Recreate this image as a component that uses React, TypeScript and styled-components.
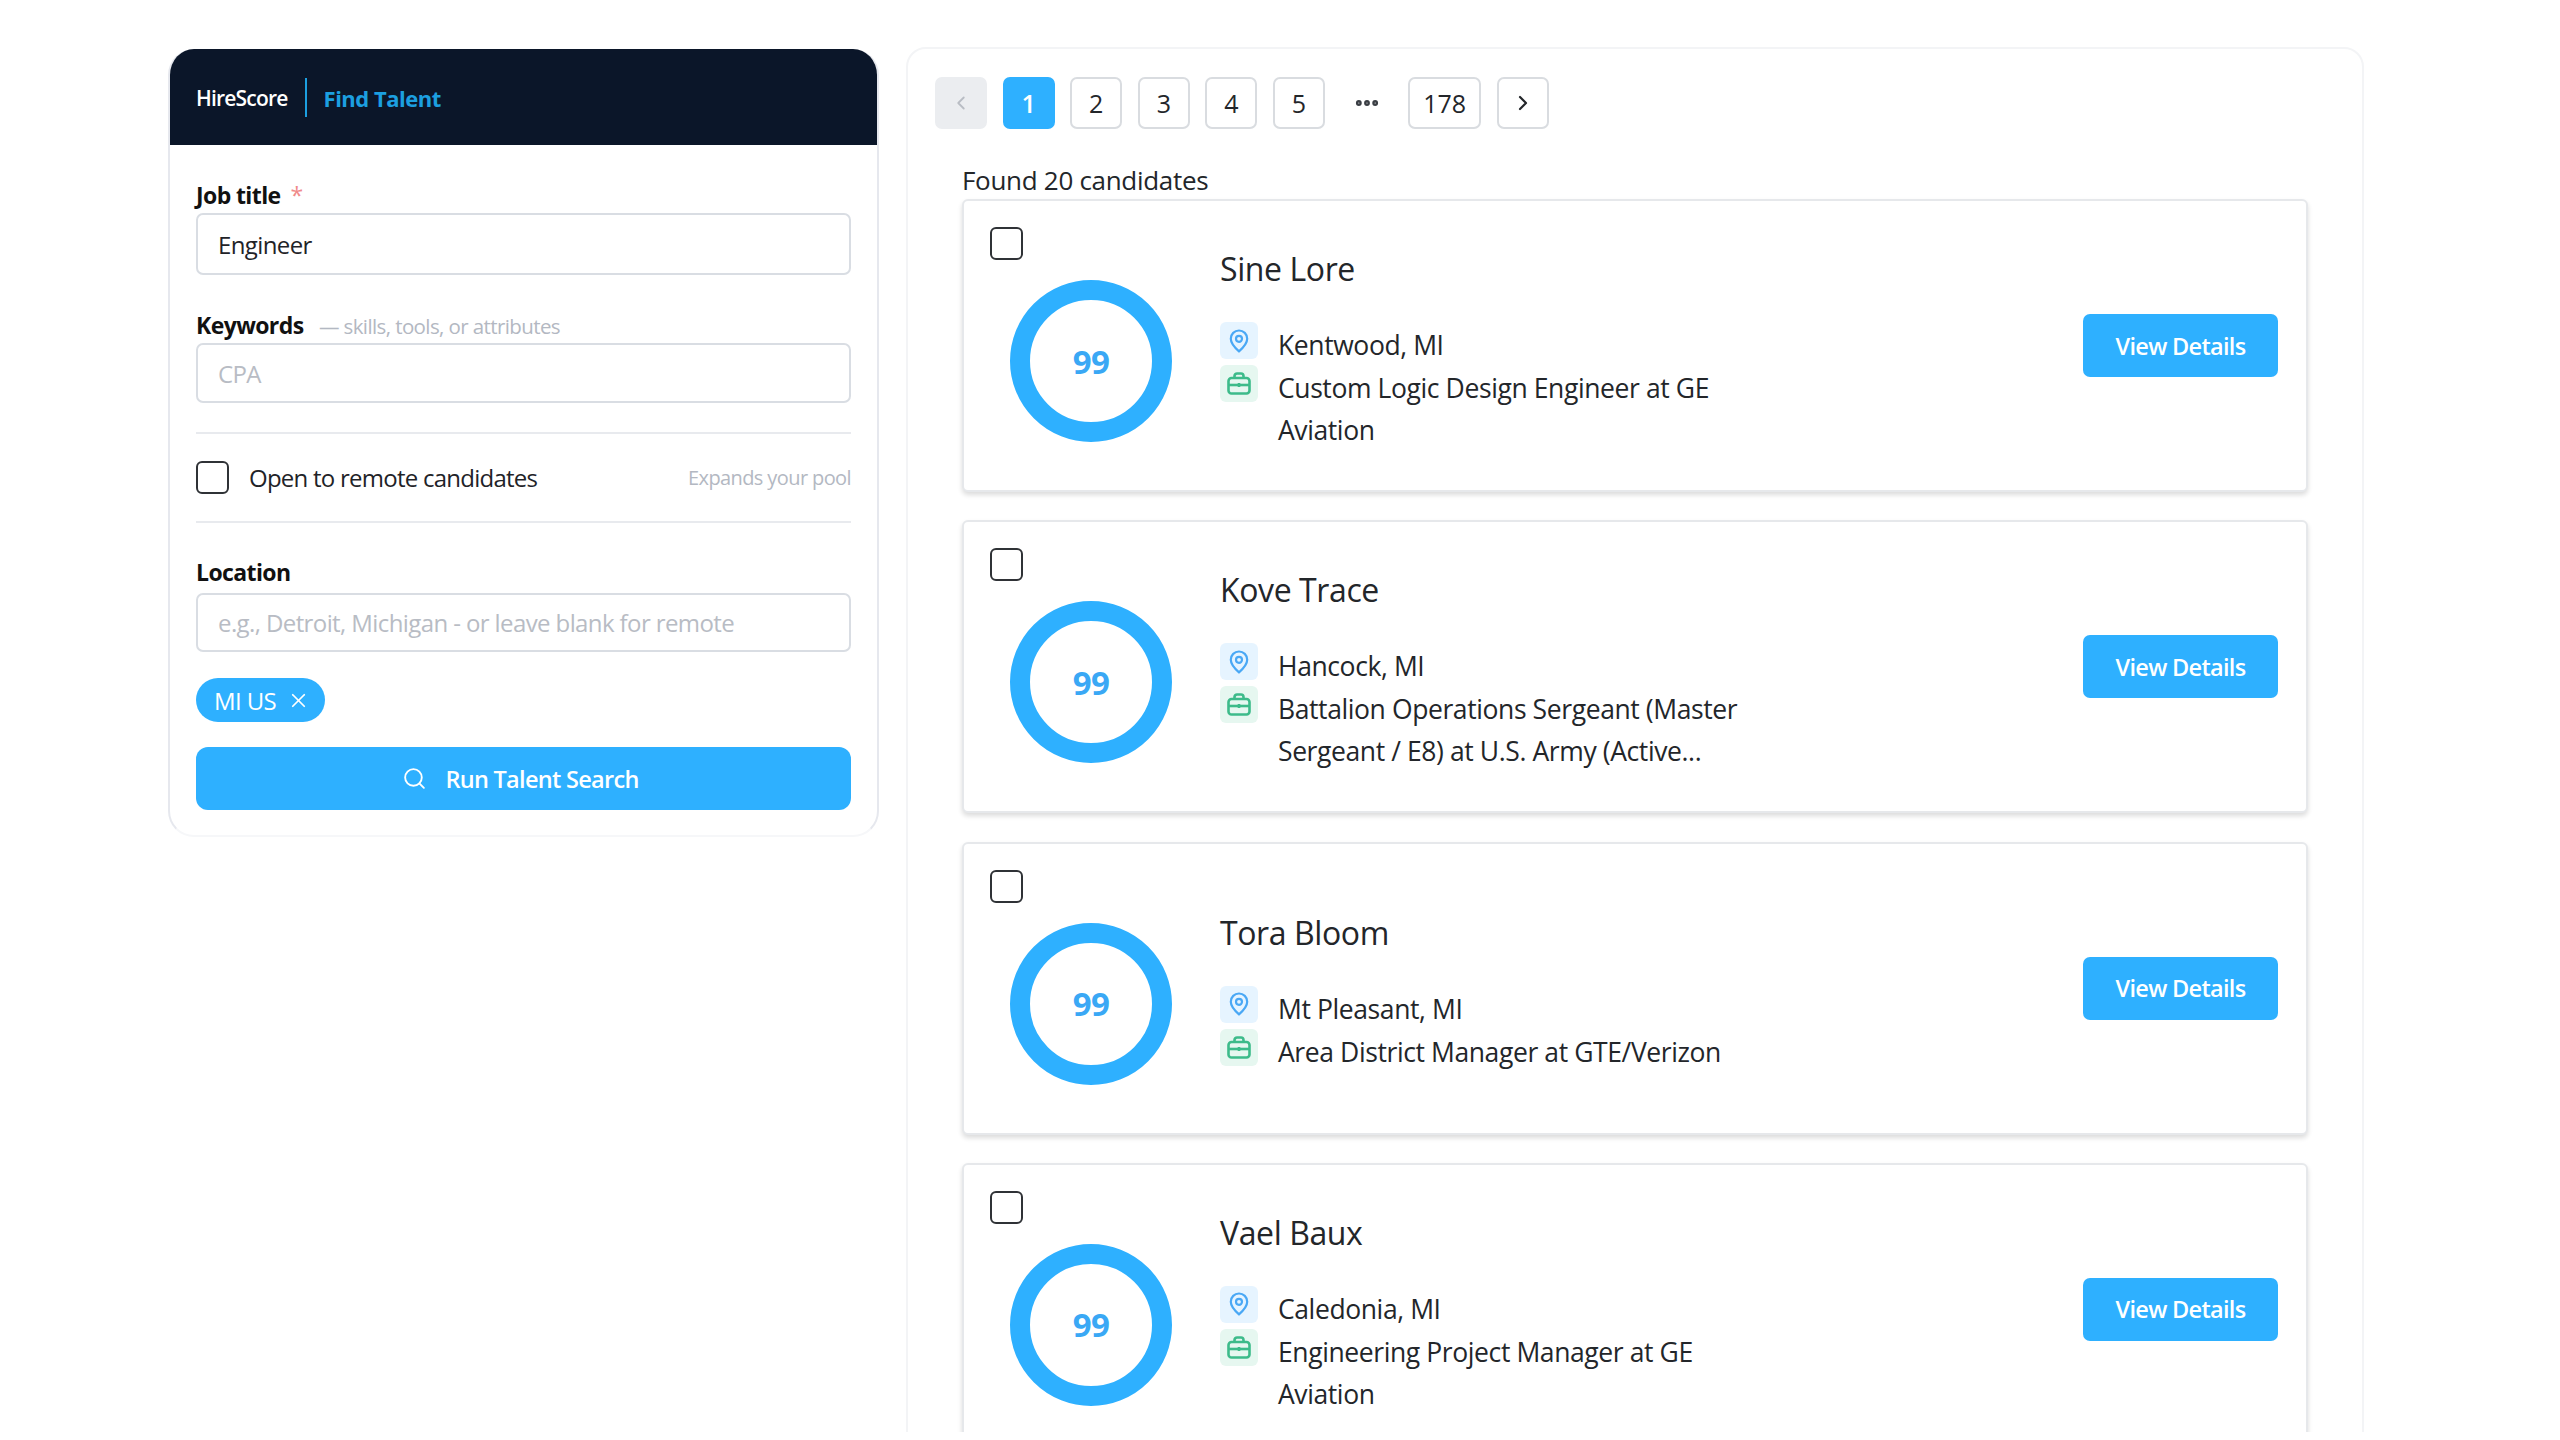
import React, { FC } from 'react';
import styled, { createGlobalStyle } from 'styled-components';
import { ChevronLeft, ChevronRight, Ellipsis, Search, X } from 'lucide-react';

const BLUE = '#2eb0ff';

const candidates = [
	{ name: 'Sine Lore', location: 'Kentwood, MI', job: 'Custom Logic Design Engineer at GE Aviation' },
	{ name: 'Kove Trace', location: 'Hancock, MI', job: 'Battalion Operations Sergeant (Master Sergeant / E8) at U.S. Army (Active...' },
	{ name: 'Tora Bloom', location: 'Mt Pleasant, MI', job: 'Area District Manager at GTE/Verizon' },
	{ name: 'Vael Baux', location: 'Caledonia, MI', job: 'Engineering Project Manager at GE Aviation' },
];

const PinIcon = () => (
	<svg width="20" height="24" viewBox="0 0 20 24" fill="none" stroke="#4aa8f5" strokeWidth="2.2">
		<path d="M10 1.5a8.2 8.2 0 0 0-8.2 8.2c0 5.4 8.2 12.6 8.2 12.6s8.2-7.2 8.2-12.6A8.2 8.2 0 0 0 10 1.5z" />
		<circle cx="10" cy="9.8" r="3" />
	</svg>
);

const CaseIcon = () => (
	<svg width="24" height="23" viewBox="0 0 24 23" fill="none" stroke="#3dbb8a" strokeWidth="2.6">
		<rect x="1.5" y="6" width="21" height="15.5" rx="3" />
		<path d="M7.5 6V4a2.500 2.500 0 0 1 2.500-2.500h4A2.500 2.500 0 0 1 16.500 4v2" />
		<path d="M1.500 13h21" />
		<path d="M12 11v4" />
	</svg>
);

const ScoreRing: FC<{ value: number }> = ({ value }) => (
	<Ring>
		<RingValue>{value}</RingValue>
	</Ring>
);

export default function App() {
	return (
		<>
			<GlobalStyle />
			<Page>
				<SearchPanel>
					<PanelHeader>
						<Brand>HireScore</Brand>
						<HeaderRule />
						<HeaderTitle>Find Talent</HeaderTitle>
					</PanelHeader>
					<PanelBody>
						<FieldLabel>
							Job title<Required>*</Required>
						</FieldLabel>
						<TextInput $height={62} value="Engineer" readOnly />
						<FieldLabel $top={34}>
							Keywords <Hint>— skills, tools, or attributes</Hint>
						</FieldLabel>
						<TextInput $height={60} placeholder="CPA" readOnly />
						<Divider $top={29} />
						<RemoteRow>
							<CheckBox type="checkbox" readOnly />
							<RemoteText>Open to remote candidates</RemoteText>
							<RemoteHint>Expands your pool</RemoteHint>
						</RemoteRow>
						<Divider />
						<FieldLabel $top={33} $below={3}>
							Location
						</FieldLabel>
						<TextInput $height={59} placeholder="e.g., Detroit, Michigan - or leave blank for remote" readOnly />
						<Chip>
							MI US
							<X size={23} strokeWidth={1.8} />
						</Chip>
						<RunButton>
							<Search size={25} strokeWidth={1.8} />
							Run Talent Search
						</RunButton>
					</PanelBody>
				</SearchPanel>
				<ResultsPanel>
					<Pager>
						<PageButton $muted>
							<ChevronLeft size={22} strokeWidth={2} />
						</PageButton>
						<PageButton $active>1</PageButton>
						<PageButton>2</PageButton>
						<PageButton>3</PageButton>
						<PageButton>4</PageButton>
						<PageButton>5</PageButton>
						<PageGap>
							<Ellipsis size={28} strokeWidth={3} />
						</PageGap>
						<PageButton $wide>178</PageButton>
						<PageButton>
							<ChevronRight size={24} strokeWidth={2.2} />
						</PageButton>
					</Pager>
					<ResultList>
						<FoundText>Found 20 candidates</FoundText>
						{candidates.map((el, i) => (
							<Card key={i}>
								<CardLeft>
									<CheckBox type="checkbox" readOnly />
									<ScoreRing value={99} />
								</CardLeft>
								<CardInfo>
									<CandidateName>{el.name}</CandidateName>
									<InfoRow>
										<IconTile $tone="#e6f4ff">
											<PinIcon />
										</IconTile>
										<InfoText>{el.location}</InfoText>
									</InfoRow>
									<InfoRow>
										<IconTile $tone="#e6f7f0">
											<CaseIcon />
										</IconTile>
										<InfoText>{el.job}</InfoText>
									</InfoRow>
								</CardInfo>
								<DetailsButton>View Details</DetailsButton>
							</Card>
						))}
					</ResultList>
				</ResultsPanel>
			</Page>
		</>
	);
}

const GlobalStyle = createGlobalStyle`
	html, body {
		margin: 0;
		background: #fff;
	}
	body {
		font-family: "Open Sans", "Noto Sans", "Liberation Sans", sans-serif;
		color: #1f2328;
		letter-spacing: -0.6px;
	}
	* {
		box-sizing: border-box;
	}
`;

const Page = styled.div`
	display: flex;
	align-items: flex-start;
	gap: 27px;
	height: 1432px;
	overflow: hidden;
	padding: 47px 0 0 168px;
`;

const SearchPanel = styled.section`
	flex: 0 0 711px;
	margin-top: 2px;
	background: #fff;
	border: 2px solid #e6e8ee;
	border-top: 0;
	border-bottom-color: #f6f7f9;
	border-radius: 26px;
	overflow: hidden;
`;

const PanelHeader = styled.header`
	display: flex;
	align-items: center;
	height: 96px;
	margin: 0 -2px;
	padding: 1px 0 0 28px;
	background: #0b1629;
`;

const Brand = styled.span`
	font-size: 21px;
	font-weight: 600;
	color: #fff;
	letter-spacing: -0.8px;
`;

const HeaderRule = styled.span`
	width: 2px;
	height: 39px;
	margin: 0 17px;
	background: #1c9fe0;
`;

const HeaderTitle = styled.span`
	font-size: 22px;
	font-weight: 700;
	letter-spacing: -0.5px;
	color: #1c9fe0;
`;

const PanelBody = styled.div`
	display: flex;
	flex-direction: column;
	padding: 34px 26px 25px;
`;

const FieldLabel = styled.label<{ $top?: number; $below?: number }>`
	display: block;
	height: 34px;
	margin-top: ${(p) => p.$top ?? 0}px;
	margin-bottom: ${(p) => p.$below ?? 0}px;
	font-size: 23px;
	line-height: 32px;
	font-weight: 700;
	color: #111;
`;

const Required = styled.span`
	margin-left: 10px;
	font-weight: 400;
	color: #f08a8a;
`;

const Hint = styled.span`
	margin-left: 10px;
	font-size: 20.5px;
	font-weight: 400;
	color: #b3b8c2;
`;

const TextInput = styled.input<{ $height: number }>`
	width: 100%;
	height: ${(p) => p.$height}px;
	padding: 0 20px;
	border: 2px solid #d9dde3;
	border-radius: 7px;
	outline: none;
	background: #fff;
	font: inherit;
	font-size: 24px;
	letter-spacing: -0.6px;
	color: #1f2328;

	&::placeholder {
		color: #b8bcc4;
	}
`;

const Divider = styled.hr<{ $top?: number }>`
	width: 100%;
	height: 2px;
	margin: ${(p) => p.$top ?? 0}px 0 0;
	border: 0;
	background: #e8eaee;
`;

const RemoteRow = styled.div`
	display: flex;
	align-items: center;
	height: 87px;
`;

const CheckBox = styled.input`
	appearance: none;
	flex: none;
	display: block;
	width: 33px;
	height: 33px;
	margin: 0;
	border: 2.5px solid #2f3236;
	border-radius: 6px;
	background: #fff;
`;

const RemoteText = styled.span`
	margin-left: 20px;
	font-size: 24px;
	letter-spacing: -0.75px;
`;

const RemoteHint = styled.span`
	margin-left: auto;
	font-size: 20px;
	color: #b3b8c2;
`;

const Chip = styled.div`
	display: inline-flex;
	align-items: center;
	align-self: flex-start;
	gap: 11px;
	height: 44px;
	margin-top: 26px;
	padding: 0 15px 0 18px;
	border-radius: 22px;
	background: ${BLUE};
	font-size: 24px;
	color: #fff;
`;

const RunButton = styled.button`
	display: flex;
	align-items: center;
	justify-content: center;
	gap: 18px;
	width: 100%;
	height: 63px;
	margin-top: 25px;
	padding: 0 6px 0 0;
	border: 0;
	border-radius: 12px;
	background: ${BLUE};
	font: inherit;
	font-size: 23.5px;
	font-weight: 600;
	letter-spacing: -0.7px;
	color: #fff;
`;

const ResultsPanel = styled.main`
	flex: 0 0 1458px;
	height: 1600px;
	padding: 28px 54px 0 27px;
	border: 2px solid #f3f4f6;
	border-radius: 20px;
`;

const Pager = styled.nav`
	display: flex;
	gap: 15.6px;
`;

const PageButton = styled.button<{ $active?: boolean; $muted?: boolean; $wide?: boolean }>`
	display: flex;
	align-items: center;
	justify-content: center;
	width: ${(p) => (p.$wide ? 73 : 52)}px;
	height: 52px;
	padding: 0;
	border: 2px solid ${(p) => (p.$active ? BLUE : p.$muted ? '#ebedf0' : '#d9dce0')};
	border-radius: 7px;
	background: ${(p) => (p.$active ? BLUE : p.$muted ? '#ebedf0' : '#fff')};
	font: inherit;
	font-size: 25px;
	font-weight: ${(p) => (p.$active ? 600 : 400)};
	color: ${(p) => (p.$active ? '#fff' : p.$muted ? '#b9bdc4' : '#23262a')};
`;

const PageGap = styled.span`
	display: flex;
	align-items: center;
	justify-content: center;
	width: 52px;
	height: 52px;
	color: #3a3e44;
`;

const ResultList = styled.div`
	padding: 0 0 0 27px;
`;

const FoundText = styled.div`
	height: 44px;
	margin-top: 26px;
	font-size: 26px;
	line-height: 50px;
	letter-spacing: -0.3px;
	color: #23262a;
`;

const Card = styled.article`
	display: flex;
	align-items: center;
	height: 293px;
	margin-bottom: 28.3px;
	padding: 0 28px 0 26px;
	border: 2px solid #e6e8eb;
	border-radius: 6px;
	background: #fff;
	box-shadow: 0 3px 5px rgba(0, 0, 0, 0.14);
`;

const CardLeft = styled.div`
	display: flex;
	flex-direction: column;
	align-self: flex-start;
	gap: 20px;
	padding-top: 26px;
`;

const Ring = styled.div`
	display: flex;
	align-items: center;
	justify-content: center;
	width: 162px;
	height: 162px;
	margin-left: 20px;
	border: 20px solid ${BLUE};
	border-radius: 50%;
`;

const RingValue = styled.span`
	font-size: 33px;
	font-weight: 700;
	color: #3aa8f5;
`;

const CardInfo = styled.div`
	flex: 1;
	margin-left: 48px;
`;

const CandidateName = styled.h3`
	margin: 0 0 27px;
	font-size: 32px;
	line-height: 57px;
	font-weight: 400;
	letter-spacing: -0.4px;
	color: #23262a;
`;

const InfoRow = styled.div`
	display: flex;
	align-items: flex-start;

	& + & {
		margin-top: 1px;
	}
`;

const IconTile = styled.span<{ $tone: string }>`
	flex: none;
	display: flex;
	align-items: center;
	justify-content: center;
	width: 38px;
	height: 37px;
	margin-top: -2px;
	border-radius: 6px;
	background: ${(p) => p.$tone};
`;

const InfoText = styled.span`
	width: 480px;
	margin-left: 20px;
	font-size: 26.5px;
	line-height: 42px;
	letter-spacing: -0.4px;
	color: #23262a;
`;

const DetailsButton = styled.button`
	flex: none;
	width: 195px;
	height: 63px;
	border: 0;
	border-radius: 7px;
	background: ${BLUE};
	font: inherit;
	font-size: 23.5px;
	font-weight: 600;
	letter-spacing: -0.7px;
	color: #fff;
`;
